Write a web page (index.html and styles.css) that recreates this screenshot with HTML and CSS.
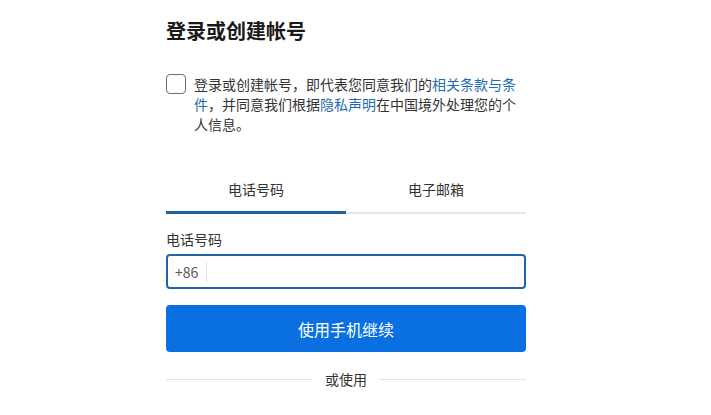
FILE: index.html
```html
<!DOCTYPE html>
<html lang="zh-CN">
<head>
<meta charset="utf-8">
<title>登录或创建帐号</title>
<link rel="stylesheet" href="styles.css">
</head>
<body>
<main class="panel">
  <h1 class="title">登录或创建帐号</h1>
  <div class="consent">
    <span class="checkbox"></span>
    <p class="consent-text">登录或创建帐号，即代表您同意我们的<a class="link" href="#">相关条款与条件</a>，并同意我们根据<a class="link" href="#">隐私声明</a>在中国境外处理您的个人信息。</p>
  </div>
  <div class="tabs">
    <div class="tab tab-active">电话号码</div>
    <div class="tab">电子邮箱</div>
  </div>
  <label class="field-label">电话号码</label>
  <div class="input">
    <span class="prefix">+86</span>
    <span class="sep"></span>
  </div>
  <button class="primary">使用手机继续</button>
  <div class="divider"><span class="divider-text">或使用</span></div>
</main>
</body>
</html>
```

FILE: styles.css
```css
html, body {
  margin: 0;
  padding: 0;
  background: #ffffff;
}
body {
  font-family: "Noto Sans CJK SC", "Noto Sans", sans-serif;
  color: #333333;
}
.panel {
  width: 360px;
  margin-left: 166px;
  padding-top: 17px;
  display: flex;
  flex-direction: column;
}
.title {
  margin: 0;
  font-size: 20px;
  line-height: 28px;
  font-weight: 700;
  color: #1a1a1a;
}
.consent {
  margin-top: 29px;
  display: flex;
  gap: 8px;
}
.checkbox {
  flex: none;
  width: 20px;
  height: 20px;
  box-sizing: border-box;
  border: 1px solid #6e6e6e;
  border-radius: 4px;
}
.consent-text {
  margin: 0;
  font-size: 14px;
  line-height: 20px;
  color: #333333;
}
.link {
  color: #1b6cb5;
  text-decoration: none;
}
.tabs {
  margin-top: 35px;
  display: flex;
  border-bottom: 2px solid #e6e6e6;
}
.tab {
  flex: 1;
  text-align: center;
  font-size: 14px;
  line-height: 20px;
  padding: 10px 0 12px;
  color: #333333;
  margin-bottom: -2px;
  border-bottom: 3px solid transparent;
}
.tab-active {
  border-bottom-color: #1d64a6;
}
.field-label {
  margin-top: 15px;
  font-size: 14px;
  line-height: 20px;
  color: #333333;
}
.input {
  margin-top: 5px;
  height: 35px;
  box-sizing: border-box;
  border: 2px solid #1f64a8;
  border-radius: 4px;
  display: flex;
  align-items: center;
  padding-left: 7px;
}
.prefix {
  font-size: 14px;
  color: #595959;
}
.sep {
  width: 1px;
  height: 20px;
  background: #e0e0e0;
  margin-left: 8px;
}
.primary {
  margin-top: 16px;
  height: 47px;
  border: none;
  border-radius: 4px;
  background: #0a6fe1;
  color: #ffffff;
  font-family: inherit;
  font-size: 16px;
  cursor: pointer;
}
.divider {
  margin-top: 17px;
  display: flex;
  align-items: center;
  gap: 12px;
}
.divider::before, .divider::after {
  content: "";
  flex: 1;
  height: 1px;
  background: #e3e3e3;
}
.divider-text {
  font-size: 14px;
  line-height: 20px;
  color: #333333;
}
```
